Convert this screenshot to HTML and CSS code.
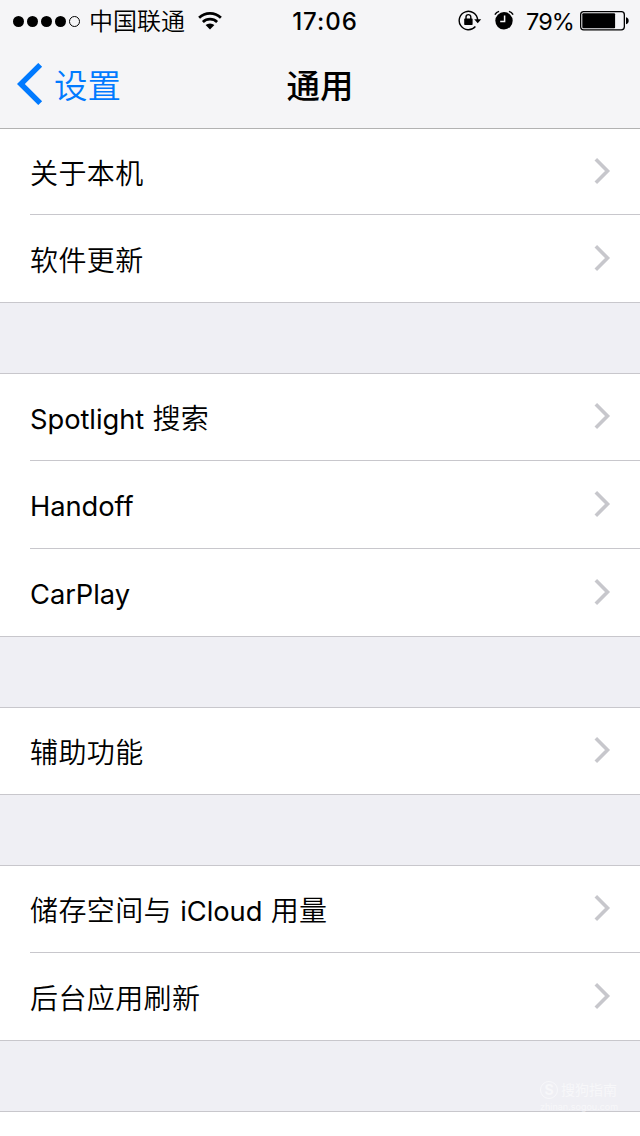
FILE: index.html
```html
<!DOCTYPE html>
<html lang="zh-CN">
<head>
  <meta charset="UTF-8">
  <meta name="viewport" content="width=device-width">
  <title>通用</title>
  <link rel="stylesheet" href="styles.css">
</head>
<body>

  <header class="header">
    <div class="status-bar">
      <div class="status-left">
        <div class="signal">
          <i class="dot"></i><i class="dot"></i><i class="dot"></i><i class="dot"></i><i class="dot empty"></i>
        </div>
        <span class="carrier">中国联通</span>
        <svg class="wifi" width="26" height="20" viewBox="0 0 26 20">
          <g fill="none" stroke="#000" stroke-width="2.7">
            <path d="M2.1 6.8a15.8 15.8 0 0 1 21.8 0"/>
            <path d="M5.9 10.9a10.3 10.3 0 0 1 14.2 0"/>
          </g>
          <path d="M8.6 14.1a6.6 6.6 0 0 1 8.8 0L13 18.6z"/>
        </svg>
      </div>
      <span class="time">17:06</span>
      <div class="status-right">
        <svg class="lock" width="24" height="22" viewBox="0 0 24 22">
          <path d="M17.4 17.5A9.2 9.2 0 1 1 19.6 11" fill="none" stroke="#000" stroke-width="1.4"/>
          <path d="M16.2 10.3h7l-3.5 3.9z"/>
          <rect x="6.2" y="9.4" width="8.4" height="6.6" rx=".7"/>
          <path d="M8 10V8a2.4 2.4 0 0 1 4.8 0v2" fill="none" stroke="#000" stroke-width="1.4"/>
        </svg>
        <svg class="alarm" width="20" height="20" viewBox="0 0 20 20">
          <circle cx="10" cy="10.8" r="8.7"/>
          <path d="M.9 4.6a7 7 0 0 1 4.2-3.2M19.1 4.6a7 7 0 0 0-4.2-3.2" fill="none" stroke="#000" stroke-width="1.5"/>
          <path d="M10.6 5.6v5.8H6.2" fill="none" stroke="#f5f5f7" stroke-width="1.5"/>
        </svg>
        <span class="percent">79%</span>
        <svg class="battery" width="49" height="20" viewBox="0 0 49 20">
          <rect x=".65" y=".65" width="43.7" height="18.2" rx="3" fill="none" stroke="#000" stroke-width="1.3"/>
          <rect x="2.3" y="2.3" width="32.8" height="14.9" rx="1"/>
          <path d="M46 6.3c3.6.8 3.6 6.2 0 7z"/>
        </svg>
      </div>
    </div>
    <nav class="nav-bar">
      <a class="back">
        <svg width="26" height="42" viewBox="0 0 26 42">
          <path d="M23.2 1.9 3.9 21l19.3 19.1" fill="none" stroke="#007aff" stroke-width="5.5"/>
        </svg>
        <span>设置</span>
      </a>
      <h1 class="title">通用</h1>
    </nav>
  </header>

  <main>
    <ul class="group first">
      <li class="row"><span>关于本机</span><svg class="chevron" viewBox="0 0 18 28"><path d="M1.8 2.3 13.5 14 1.8 25.7"/></svg></li>
      <li class="row"><span>软件更新</span><svg class="chevron" viewBox="0 0 18 28"><path d="M1.8 2.3 13.5 14 1.8 25.7"/></svg></li>
    </ul>

    <ul class="group">
      <li class="row"><span><b class="en">Spotlight</b> 搜索</span><svg class="chevron" viewBox="0 0 18 28"><path d="M1.8 2.3 13.5 14 1.8 25.7"/></svg></li>
      <li class="row"><span><b class="en">Handoff</b></span><svg class="chevron" viewBox="0 0 18 28"><path d="M1.8 2.3 13.5 14 1.8 25.7"/></svg></li>
      <li class="row"><span><b class="en">CarPlay</b></span><svg class="chevron" viewBox="0 0 18 28"><path d="M1.8 2.3 13.5 14 1.8 25.7"/></svg></li>
    </ul>

    <ul class="group">
      <li class="row"><span>辅助功能</span><svg class="chevron" viewBox="0 0 18 28"><path d="M1.8 2.3 13.5 14 1.8 25.7"/></svg></li>
    </ul>

    <ul class="group">
      <li class="row"><span>储存空间与 <b class="en">iCloud</b> 用量</span><svg class="chevron" viewBox="0 0 18 28"><path d="M1.8 2.3 13.5 14 1.8 25.7"/></svg></li>
      <li class="row"><span>后台应用刷新</span><svg class="chevron" viewBox="0 0 18 28"><path d="M1.8 2.3 13.5 14 1.8 25.7"/></svg></li>
    </ul>

    <div class="group next"></div>
  </main>

  <div class="watermark">
    <div class="brand"><span class="brand-icon">S</span>搜狗指南</div>
    <div class="site">zhinan.sogou.com</div>
  </div>

</body>
</html>
```

FILE: styles.css
```css
* {
  box-sizing: border-box;
}

body {
  position: relative;
  margin: 0;
  background: #efeff4;
  color: #000;
  font-family: Inter, "Noto Sans CJK SC", sans-serif;
}

.header {
  height: 129px;
  background: #f5f5f7;
  border-bottom: 1px solid #b2b2b2;
}

.status-bar {
  display: grid;
  grid-template-columns: 1fr auto 1fr;
  align-items: center;
  height: 40px;
  padding: 1px 11px 0 13px;
}

.status-left,
.status-right {
  display: flex;
  align-items: center;
}

.status-right {
  justify-content: flex-end;
}

.signal {
  display: flex;
  gap: 3px;
}

.dot {
  width: 11px;
  height: 11px;
  border-radius: 50%;
  background: #000;
}

.dot.empty {
  background: none;
  border: 1px solid #000;
}

.carrier {
  margin-left: 9px;
  padding-top: 2px;
  font-size: 24px;
  font-weight: 350;
  line-height: 38px;
}

.wifi {
  margin-left: 12px;
}

.time {
  padding: 1px 0 0 8px;
  font-size: 24px;
  font-weight: 550;
  letter-spacing: 1px;
}

.lock {
  margin-top: -2px;
}

.alarm {
  margin: -2px 0 0 12px;
}

.percent {
  margin: 1px 6px 0 12px;
  font-size: 23.5px;
  font-weight: 380;
  letter-spacing: -0.9px;
}

.nav-bar {
  display: grid;
  grid-template-columns: 1fr auto 1fr;
  align-items: center;
  height: 88px;
  padding: 0 17px;
}

.back {
  display: flex;
  align-items: center;
  gap: 11px;
  color: #007aff;
  font-size: 33.5px;
  font-weight: 350;
}

.back span,
.title {
  margin: -2px 0 0;
}

.title {
  font-size: 33.5px;
  font-weight: 500;
}

.group {
  margin: 70px 0 0;
  padding: 0;
  list-style: none;
  background: #fff;
  border-top: 1px solid #c8c7cc;
  border-bottom: 1px solid #c8c7cc;
}

.group.first {
  margin-top: 0;
  border-top: none;
}

.group.next {
  height: 25px;
  border-bottom: none;
}

.row {
  display: flex;
  align-items: center;
  justify-content: space-between;
  height: 88px;
  margin-left: 30px;
  padding: 4px 28px 0 0;
  border-bottom: 1px solid #c8c7cc;
  font-size: 28px;
  font-weight: 350;
  line-height: 40px;
  letter-spacing: 0.4px;
}

.row:first-child {
  height: 87px;
}

.first .row:first-child {
  height: 86px;
}

.row:last-child {
  height: 87px;
  border-bottom: none;
}

.row:only-child {
  height: 86px;
}

.en {
  font-size: 27.3px;
  font-weight: 380;
  letter-spacing: -0.05px;
}

.chevron {
  width: 18px;
  height: 28px;
  margin-top: -6px;
  fill: none;
  stroke: #c7c7cc;
  stroke-width: 3.6;
}

.watermark {
  position: absolute;
  left: 540px;
  top: 1080px;
  color: rgba(255, 255, 255, 0.5);
  font-size: 14px;
  line-height: 20px;
}

.brand {
  display: flex;
  align-items: center;
  gap: 3px;
}

.brand-icon {
  width: 18px;
  height: 18px;
  border: 1px solid;
  border-radius: 50%;
  font-weight: 700;
  line-height: 16px;
  text-align: center;
}

.site {
  font-size: 9px;
  line-height: 14px;
}
```
